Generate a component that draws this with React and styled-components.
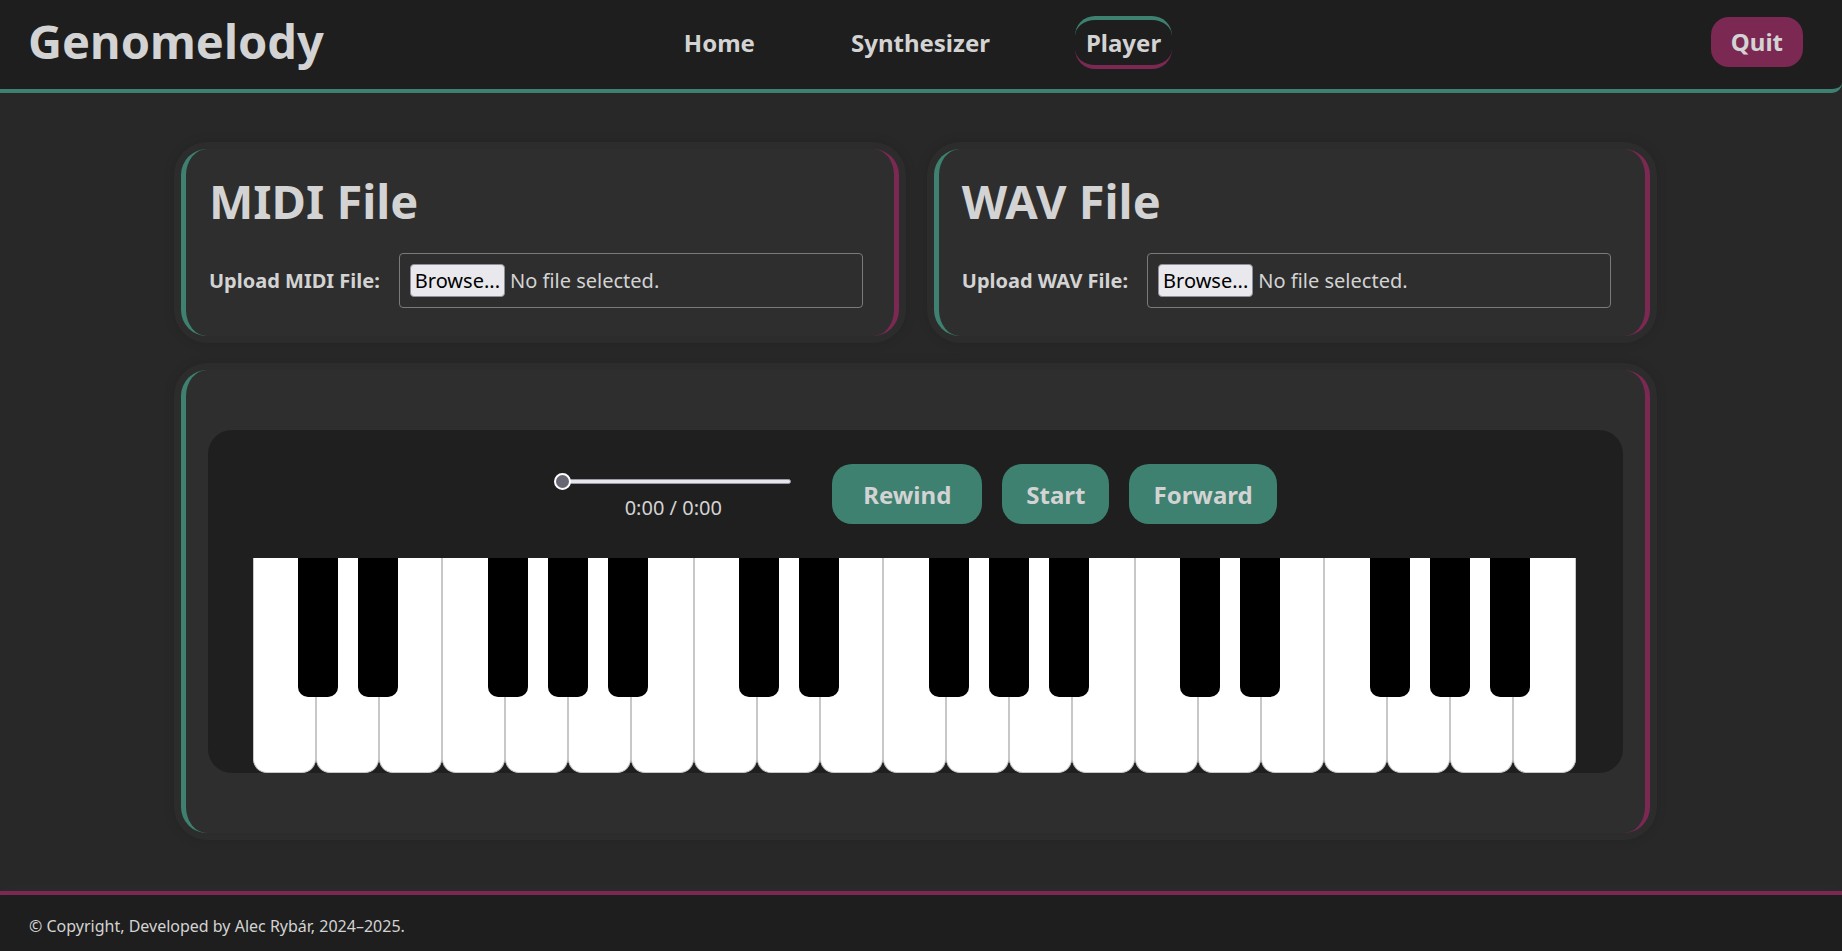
import React from "react";
import styled, { createGlobalStyle } from "styled-components";

const TEAL = "#3e8170";
const MAGENTA = "#7b2853";
const TEXT = "#d3d3d3";

const Global = createGlobalStyle`
  html, body { margin: 0; padding: 0; }
  body {
    background: #282828;
    font-family: "Noto Sans", "Open Sans", sans-serif;
    color: ${TEXT};
  }
  * { box-sizing: border-box; }
`;

const Page = styled.div`
  min-height: 100vh;
  display: flex;
  flex-direction: column;
`;

const Header = styled.header`
  display: grid;
  grid-template-columns: 1fr auto 1fr;
  align-items: center;
  height: 93px;
  padding: 0 39px 5px 28px;
  background: #1e1e1e;
  border-bottom: 4px solid ${TEAL};
  border-bottom-right-radius: 10px;
`;

const Logo = styled.h1`
  margin: 0 0 3px 0;
  font-size: 47px;
  font-weight: 700;
  color: ${TEXT};
  justify-self: start;
`;

const Nav = styled.nav`
  display: flex;
  gap: 74px;
  margin-left: 14px;
`;

const NavLink = styled.a`
  font-size: 24px;
  font-weight: 700;
  color: ${TEXT};
  text-decoration: none;
  padding: 6px 11px;
  border-radius: 20px;
  border-top: 4px solid ${(p) => (p.$active ? TEAL : "transparent")};
  border-bottom: 4px solid ${(p) => (p.$active ? MAGENTA : "transparent")};
  cursor: pointer;
`;

const QuitButton = styled.button`
  justify-self: end;
  font-family: inherit;
  font-size: 24px;
  font-weight: 700;
  color: ${TEXT};
  background: ${MAGENTA};
  border: none;
  border-radius: 18px;
  height: 50px;
  padding: 0 20px;
  margin-bottom: 1px;
  cursor: pointer;
`;

const Main = styled.main`
  flex: 1;
  padding: 56px 0 58px 181px;
`;

const Grid = styled.div`
  width: 1469px;
  display: grid;
  grid-template-columns: 1fr 1fr;
  gap: 34px 35px;
`;

const Card = styled.section`
  background: #2e2e2e;
  border-left: 5px solid ${TEAL};
  border-right: 5px solid ${MAGENTA};
  border-radius: 26px;
  box-shadow: 0 0 0 7px #2c2c2c, 0 0 12px 7px rgba(0, 0, 0, 0.12);
  grid-column: ${(p) => (p.$wide ? "1 / -1" : "auto")};
  padding: ${(p) => (p.$wide ? "60px 22px" : "21px 31px 28px 23px")};
`;

const CardTitle = styled.h2`
  margin: 0 0 21px 0;
  font-size: 47px;
  font-weight: 700;
  line-height: 62px;
  color: ${TEXT};
`;

const UploadRow = styled.div`
  display: flex;
  align-items: center;
  gap: 19px;
`;

const UploadLabel = styled.label`
  font-size: 20px;
  font-weight: 700;
  color: ${TEXT};
  white-space: nowrap;
`;

const FileBox = styled.div`
  width: 464px;
  display: flex;
  align-items: center;
  gap: 5px;
  height: 55px;
  padding: 0 10px;
  border: 1px solid #7a7a7a;
  border-radius: 4px;
`;

const BrowseButton = styled.button`
  font-family: inherit;
  font-size: 20px;
  color: #000;
  background: #e9e9ed;
  border: 1px solid #8f8f9d;
  border-radius: 4px;
  height: 33px;
  padding: 0 4px;
`;

const FileText = styled.span`
  font-size: 20px;
  color: ${TEXT};
`;

const PlayerPanel = styled.div`
  background: #1f1f1f;
  border-radius: 24px;
  padding: 34px 45px 0;
  display: flex;
  flex-direction: column;
  align-items: center;
  gap: 34px;
`;

const Controls = styled.div`
  display: flex;
  align-items: center;
  gap: 20px;
`;

const SeekColumn = styled.div`
  display: flex;
  flex-direction: column;
  align-items: center;
  gap: 4px;
  width: 238px;
  margin: 5px 20px 0 0;
`;

const Slider = styled.div`
  position: relative;
  width: 100%;
  height: 17px;
  display: flex;
  align-items: center;
`;

const Track = styled.div`
  margin-left: 9px;
  width: 228px;
  height: 5px;
  background: #e6e5ec;
  border: 1px solid #9a9aa6;
  border-radius: 3px;
`;

const Thumb = styled.div`
  position: absolute;
  left: 0;
  top: 0;
  width: 17px;
  height: 17px;
  border-radius: 50%;
  background: #676774;
  border: 2px solid #fff;
`;

const TimeText = styled.span`
  font-size: 20px;
  color: ${TEXT};
`;

const ControlButton = styled.button`
  font-family: inherit;
  font-size: 24px;
  font-weight: 700;
  color: ${TEXT};
  background: ${TEAL};
  border: none;
  border-radius: 20px;
  height: 60px;
  padding: 0 24px;
  min-width: ${(p) => p.$min || 0}px;
  cursor: pointer;
`;

const Keyboard = styled.div`
  display: flex;
  align-self: stretch;
  height: 215px;
`;

const WhiteKey = styled.div`
  flex: 0 0 63px;
  height: 215px;
  background: #fff;
  border: 1px solid #c8c8c8;
  border-top: none;
  border-radius: 0 0 14px 14px;
`;

const BlackKey = styled.div`
  flex: 0 0 40px;
  margin: 0 ${(p) => -20 - p.$off}px 0 ${(p) => -20 + p.$off}px;
  height: 139px;
  background: #000;
  border-radius: 0 0 10px 10px;
  z-index: 1;
`;

const Footer = styled.footer`
  background: #1e1e1e;
  border-top: 4px solid ${MAGENTA};
  padding: 20px 29px 14px;
  font-size: 16px;
  color: ${TEXT};
  box-shadow: 0 -6px 14px rgba(255, 255, 255, 0.015);
`;

const octave = ["C", "D", "E", "F", "G", "A", "B"];
const sharpOffset = { C: 2, D: -1, F: 3, G: 0, A: -3 };

function Piano() {
  const keys = [];
  for (let o = 0; o < 3; o++) {
    octave.forEach((n) => {
      keys.push(<WhiteKey key={`w${o}${n}`} />);
      if (n in sharpOffset) keys.push(<BlackKey key={`b${o}${n}`} $off={sharpOffset[n]} />);
    });
  }
  return <Keyboard>{keys}</Keyboard>;
}

function Upload({ title, label }) {
  return (
    <Card>
      <CardTitle>{title}</CardTitle>
      <UploadRow>
        <UploadLabel>{label}</UploadLabel>
        <FileBox>
          <BrowseButton>Browse...</BrowseButton>
          <FileText>No file selected.</FileText>
        </FileBox>
      </UploadRow>
    </Card>
  );
}

export default function App() {
  return (
    <Page>
      <Global />
      <Header>
        <Logo>Genomelody</Logo>
        <Nav>
          <NavLink>Home</NavLink>
          <NavLink>Synthesizer</NavLink>
          <NavLink $active>Player</NavLink>
        </Nav>
        <QuitButton>Quit</QuitButton>
      </Header>
      <Main>
        <Grid>
          <Upload title="MIDI File" label="Upload MIDI File:" />
          <Upload title="WAV File" label="Upload WAV File:" />
          <Card $wide>
            <PlayerPanel>
              <Controls>
                <SeekColumn>
                  <Slider>
                    <Track />
                    <Thumb />
                  </Slider>
                  <TimeText>0:00 / 0:00</TimeText>
                </SeekColumn>
                <ControlButton $min={150}>Rewind</ControlButton>
                <ControlButton>Start</ControlButton>
                <ControlButton>Forward</ControlButton>
              </Controls>
              <Piano />
            </PlayerPanel>
          </Card>
        </Grid>
      </Main>
      <Footer>© Copyright, Developed by Alec Rybár, 2024–2025.</Footer>
    </Page>
  );
}
